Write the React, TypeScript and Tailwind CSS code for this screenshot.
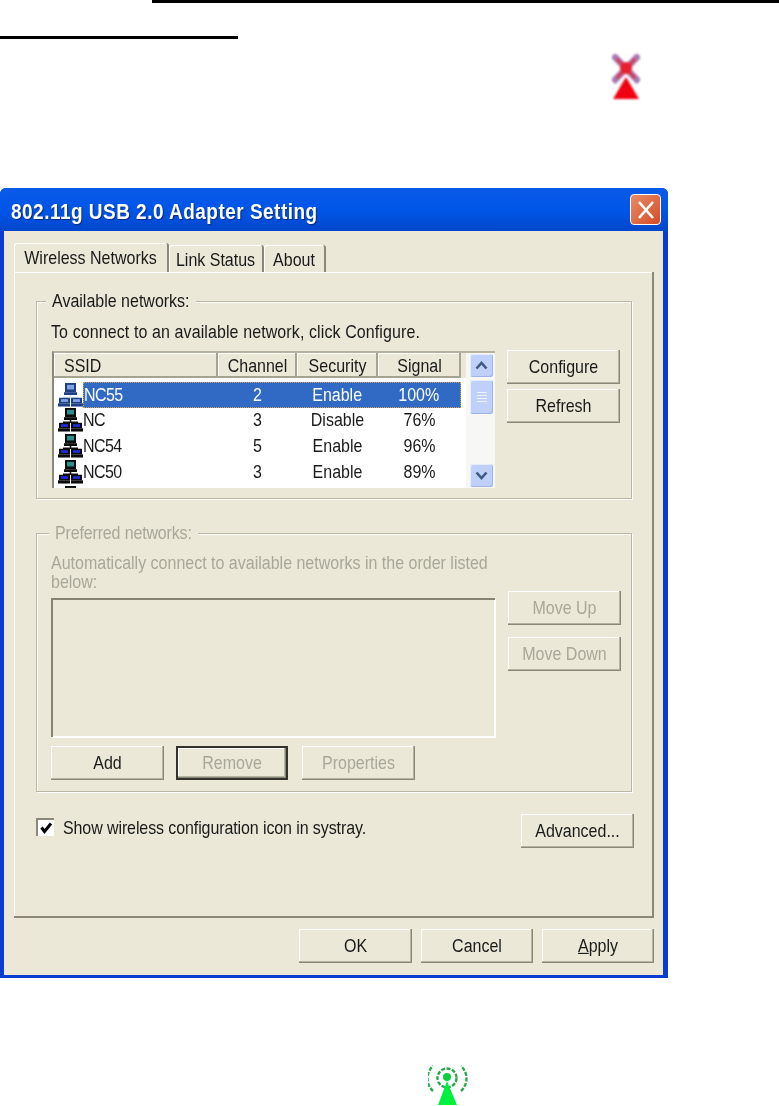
import React from "react";

function T({ children }: { children: React.ReactNode }) {
  return <span className="inline-block origin-center scale-y-[1.14] whitespace-pre">{children}</span>;
}

const btnBase =
  "flex items-center justify-center h-[34px] bg-[#ebe8d8] text-[16px] leading-none shadow-[inset_-1px_-1px_0_#8a8878,inset_-2px_-2px_0_#b5b2a0,inset_1px_1px_0_#ffffff]";

function Btn({ w = "w-[113px]", disabled = false, focus = false, children }: { w?: string; disabled?: boolean; focus?: boolean; children: React.ReactNode }) {
  return (
    <div className={`${btnBase} ${w} ${disabled ? "text-[#a9a798]" : "text-[#1a1a1a]"} ${focus ? "border-2 border-[#33332c]" : ""}`}>
      <T>{children}</T>
    </div>
  );
}

function NetIcon({ selected = false }: { selected?: boolean }) {
  const dark = selected ? "#1c3f86" : "#0b0b0b";
  const screen = selected ? "#7fa3e6" : "#1e2bd6";
  const top = selected ? "#7fa3e6" : "#2f8f8f";
  const wire = selected ? "#dfe8fa" : "#111111";
  return (
    <svg width="25" height="24" viewBox="0 0 25 26" preserveAspectRatio="none" className="shrink-0">
      <rect x="7" y="0" width="11" height="10" fill={dark} />
      <rect x="9" y="2" width="7" height="5" fill={top} />
      <rect x="6" y="10" width="13" height="3" fill={dark} />
      <path d="M12.5 13V16M5 15.5H20" stroke={wire} strokeWidth="1.5" fill="none" />
      <rect x="1" y="16" width="11" height="6" fill={dark} />
      <rect x="3" y="17.5" width="7" height="3" fill={screen} />
      <rect x="0" y="22" width="12" height="3.5" fill={dark} />
      <rect x="13" y="16" width="11" height="6" fill={dark} />
      <rect x="15" y="17.5" width="7" height="3" fill={screen} />
      <rect x="13" y="22" width="12" height="3.5" fill={dark} />
    </svg>
  );
}

function ScrollBtn({ up }: { up: boolean }) {
  return (
    <div className="flex h-[23px] w-[23px] items-center justify-center rounded-[3px] bg-[#bfd1fa] shadow-[inset_-1px_-1px_0_#9db4e8,inset_1px_1px_0_#e4ecfd]">
      <svg width="13" height="9" viewBox="0 0 13 9">
        <path d={up ? "M1.5 7.5L6.5 2L11.5 7.5" : "M1.5 1.5L6.5 7L11.5 1.5"} stroke="#3f5a80" strokeWidth="2.6" fill="none" />
      </svg>
    </div>
  );
}

const rows = [
  { ssid: "NC55", ch: "2", sec: "Enable", sig: "100%" },
  { ssid: "NC", ch: "3", sec: "Disable", sig: "76%" },
  { ssid: "NC54", ch: "5", sec: "Enable", sig: "96%" },
  { ssid: "NC50", ch: "3", sec: "Enable", sig: "89%" },
];

function Legend({ children, disabled = false }: { children: React.ReactNode; disabled?: boolean }) {
  return (
    <div className={`absolute top-[-11px] bg-[#ebe8d8] text-[16px] leading-[20px] ${disabled ? "left-[12px] px-[6px] tracking-[-0.15px] text-[#a9a798]" : "left-[9px] px-[6px] text-[#1a1a1a]"}`}>
      <T>{children}</T>
    </div>
  );
}

const groupCls =
  "relative w-[596px] border border-[#b9b6a4] shadow-[1px_1px_0_#ffffff,inset_1px_1px_0_#ffffff]";

function HeadCell({ w, children, left = false }: { w: string; children: React.ReactNode; left?: boolean }) {
  return (
    <div className={`flex h-[25px] items-center ${w} ${left ? "pl-[10px]" : "justify-center"} bg-[#ebe8d8] shadow-[inset_-2px_-2px_0_#a5a391,inset_1px_1px_0_#ffffff] text-[16px] text-[#1a1a1a]`}>
      <T>{children}</T>
    </div>
  );
}

export default function App() {
  return (
    <div className="h-[1106px] w-[779px] overflow-hidden bg-white font-['Liberation_Sans',Arial,sans-serif]">
      <div className="ml-[152px] h-[3px] bg-black" />
      <div className="mt-[33px] h-[3px] w-[238px] bg-black" />
      <div className="mt-[15px] pl-[612px]">
        <svg width="28" height="45" viewBox="0 0 28 45" className="blur-[0.9px]">
          <path d="M1 1L27 28M27 1L1 28" stroke="#a878b4" strokeWidth="6.5" />
          <path d="M5 5L23 24M23 5L5 24" stroke="#d8384c" strokeWidth="3" />
          <circle cx="14" cy="14" r="6" fill="#e8202c" />
          <path d="M14 23L27 45H1Z" fill="#f00010" />
        </svg>
      </div>

      <div className="mt-[89px] flex h-[790px] w-[668px] flex-col rounded-t-[6px] border-b-[3px] border-l-4 border-r-[5px] border-[#0a3cd0] bg-[#ebe8d8] blur-[0.4px]">
        <div className="-ml-1 -mr-[5px] flex h-[43px] shrink-0 items-center justify-between rounded-t-[6px] bg-gradient-to-b from-[#0a5ae8] via-[#0056e8] to-[#0347cc] pl-[11px] pr-[7px]">
          <div className="pt-[6px] text-[19px] font-bold tracking-[0.48px] text-white [text-shadow:1px_1px_1px_#0a2a80]">
            <T>802.11g USB 2.0 Adapter Setting</T>
          </div>
          <div className="flex h-[31px] w-[31px] items-center justify-center rounded-[4px] border border-white bg-gradient-to-br from-[#e98a66] to-[#d44a24]">
            <svg width="18" height="20" viewBox="0 0 18 20">
              <path d="M2 2L16 18M16 2L2 18" stroke="#fff" strokeWidth="2.6" />
            </svg>
          </div>
        </div>

        <div className="ml-[10px] mt-[12px] flex h-[29px] items-end text-[16px] text-[#1a1a1a]">
          <div className="relative z-10 flex h-[29px] w-[155px] items-center justify-center rounded-t-[3px] border-r-2 border-r-[#8a8878] bg-[#ebe8d8] shadow-[inset_1px_1px_0_#ffffff]"><T>Wireless Networks</T></div>
          <div className="flex h-[27px] w-[95px] items-center justify-center rounded-t-[3px] border-r-2 border-r-[#8a8878] pt-[2px] shadow-[inset_1px_1px_0_#ffffff]"><T>Link Status</T></div>
          <div className="flex h-[27px] w-[62px] items-center justify-center rounded-t-[3px] border-r-2 border-r-[#8a8878] pt-[2px] shadow-[inset_1px_1px_0_#ffffff]"><T>About</T></div>
        </div>

        <div className="ml-[10px] h-[646px] w-[640px] border-b-2 border-r-2 border-b-[#8a8878] border-r-[#8a8878] pl-[22px] pt-[29px] shadow-[inset_1px_1px_0_#ffffff]">
          <div className={`${groupCls} h-[198px] pl-[14px] pt-[20px]`}>
            <Legend>Available networks:</Legend>
            <div className="text-[16px] leading-[20px] tracking-[0.1px] text-[#1a1a1a]"><T>To connect to an available network, click Configure.</T></div>
            <div className="ml-px mt-[9px] flex items-start gap-3">
              <div className="flex h-[137px] w-[443px] overflow-hidden border-l-2 border-t-2 border-l-[#8a8878] border-t-[#b5b2a0] bg-white">
                <div className="w-[412px]">
                  <div className="flex">
                    <HeadCell w="w-[164px]" left>SSID</HeadCell>
                    <HeadCell w="w-[79px]">Channel</HeadCell>
                    <HeadCell w="w-[81px]">Security</HeadCell>
                    <HeadCell w="w-[83px]">Signal</HeadCell>
                    <div className="h-[25px] w-[5px] bg-[#ebe8d8]" />
                  </div>
                  <div className="pt-[4px]">
                    {rows.map((r, i) => (
                      <div key={r.ssid} className="flex h-[25.6px] items-center text-[16px] text-[#1a1a1a]">
                        <div className="w-[4px]" />
                        <NetIcon selected={i === 0} />
                        <div className={`flex h-[25.6px] w-[378px] items-center ${i === 0 ? "border border-dotted border-[#d8a050] bg-[#316ac5] text-white" : ""}`}>
                          <div className="w-[135px] tracking-[-0.6px]"><T>{r.ssid}</T></div>
                          <div className="w-[79px] text-center"><T>{r.ch}</T></div>
                          <div className="w-[81px] text-center"><T>{r.sec}</T></div>
                          <div className="w-[83px] text-center"><T>{r.sig}</T></div>
                        </div>
                      </div>
                    ))}
                    <div className="flex h-[8px] overflow-hidden pl-[4px] pt-[2px]">
                      <NetIcon />
                    </div>
                  </div>
                </div>
                <div className="flex h-[135px] w-[29px] flex-col justify-between bg-[#f7f7f3] py-[1px] pl-[4px]">
                  <div>
                    <ScrollBtn up />
                    <div className="mt-[3px] flex h-[34px] w-[23px] flex-col items-center justify-center gap-[2px] rounded-[3px] bg-[#bfd1fa] shadow-[inset_-1px_-1px_0_#9db4e8,inset_1px_1px_0_#e4ecfd]">
                      <div className="h-px w-[10px] bg-[#eef3fe]" />
                      <div className="h-px w-[10px] bg-[#eef3fe]" />
                      <div className="h-px w-[10px] bg-[#eef3fe]" />
                      <div className="h-px w-[10px] bg-[#eef3fe]" />
                    </div>
                  </div>
                  <ScrollBtn up={false} />
                </div>
              </div>
              <div className="-mt-px flex flex-col gap-[5px]">
                <Btn>Configure</Btn>
                <Btn>Refresh</Btn>
              </div>
            </div>
          </div>

          <div className={`${groupCls} mt-[34px] h-[259px] pl-[14px] pt-[19px]`}>
            <Legend disabled>Preferred networks:</Legend>
            <div className="flex gap-3">
              <div className="w-[445px]">
                <div className="text-[16px] leading-[19px] text-[#a9a798]">
                  <T>Automatically connect to available networks in the order listed</T>
                  <br />
                  <T>below:</T>
                </div>
                <div className="mt-[7px] h-[139px] w-[444px] border-l-2 border-t-2 border-l-[#858372] border-t-[#858372] shadow-[1px_1px_0_#ffffff,inset_-1px_-1px_0_#ffffff]" />
              </div>
              <div className="flex flex-col gap-3 pt-[38px]">
                <Btn disabled>Move Up</Btn>
                <Btn disabled>Move Down</Btn>
              </div>
            </div>
            <div className="mt-[9px] flex">
              <Btn>Add</Btn>
              <div className="ml-3">
                <Btn disabled focus w="w-[112px]">Remove</Btn>
              </div>
              <div className="ml-[14px]">
                <Btn disabled>Properties</Btn>
              </div>
            </div>
          </div>

          <div className="mt-[22px] flex w-[598px] items-start justify-between">
            <div className="flex h-[34px] items-start pt-[4px]">
              <div className="flex h-[18px] w-[18px] items-center justify-center border-l-2 border-t-2 border-l-[#8a8878] border-t-[#8a8878] bg-white">
                <svg width="13" height="12" viewBox="0 0 13 12">
                  <path d="M1.5 5.5L4.5 9.5L11 1.5" stroke="#000" strokeWidth="3" fill="none" />
                </svg>
              </div>
              <div className="ml-[9px] pt-px text-[16px] leading-[18px] tracking-[-0.1px] text-[#1a1a1a]"><T>Show wireless configuration icon in systray.</T></div>
            </div>
            <Btn>Advanced...</Btn>
          </div>
        </div>

        <div className="ml-[295px] mt-[11px] flex w-[355px] justify-between">
          <Btn>OK</Btn>
          <Btn w="w-[112px]">Cancel</Btn>
          <Btn w="w-[112px]">
            <span className="underline">A</span>pply
          </Btn>
        </div>
      </div>

      <div className="mt-[85px] pl-[428px]">
        <svg width="40" height="42" viewBox="0 0 40 42" className="blur-[0.7px]">
          <g fill="none" stroke="#2aa84f" strokeWidth="2.4" strokeDasharray="4 1.5">
            <path d="M5 28A17 17 0 0 1 5 3" />
            <path d="M33 28A17 17 0 0 0 33 3" />
            <circle cx="19" cy="15" r="9.5" />
          </g>
          <circle cx="19" cy="14" r="4" fill="#0ad040" />
          <path d="M19 18L29 42H10Z" fill="#00f040" />
        </svg>
      </div>
    </div>
  );
}
